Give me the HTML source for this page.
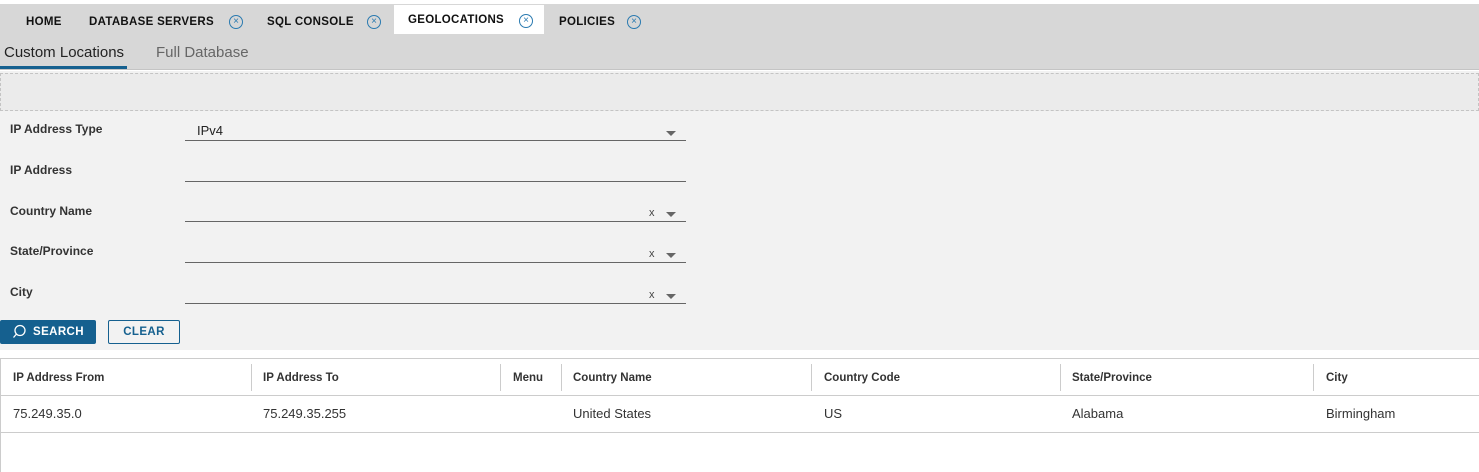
<!DOCTYPE html><html><head><style>
*{box-sizing:border-box;margin:0;padding:0}
body{width:1479px;height:472px;background:#fff;font-family:"Liberation Sans",Arial,sans-serif;position:relative;overflow:hidden;color:#222}
.abs{position:absolute}
.top{left:0;top:4px;width:1479px;height:66px;background:#d7d7d7;border-bottom:1px solid #c4c4c4}
.tab{top:16px;font-size:11.5px;font-weight:bold;letter-spacing:.3px;color:#111}
.x{width:14px;height:14px;border:1.2px solid #2a7ab0;border-radius:50%;color:#2a7ab0;font-size:10px;line-height:11px;text-align:center;font-weight:normal}
.lbl{left:10px;font-size:12px;font-weight:bold;color:#333}
.fld{left:185px;width:501px;height:1px;background:#666}
.th{top:372px;font-size:11.5px;font-weight:bold;color:#333}
.td{top:406px;font-size:13px;color:#333}
.sep{top:364px;width:1px;height:27px;background:#ccc}
.cx{font-size:11px;color:#444}
.tri{width:0;height:0;border-left:5px solid transparent;border-right:5px solid transparent;border-top:5px solid #666}
</style></head><body>
<div class="abs top"></div>
<div class="abs" style="left:394px;top:5px;width:150px;height:29px;background:#fff"></div>
<div class="abs tab" style="left:26px">HOME</div>
<div class="abs tab" style="left:89px">DATABASE SERVERS</div><div class="abs x" style="left:229px;top:15px">×</div>
<div class="abs tab" style="left:267px">SQL CONSOLE</div><div class="abs x" style="left:367px;top:15px">×</div>
<div class="abs tab" style="left:408px;top:14px">GEOLOCATIONS</div><div class="abs x" style="left:519px;top:14px">×</div>
<div class="abs tab" style="left:559px">POLICIES</div><div class="abs x" style="left:627px;top:15px">×</div>
<div class="abs" style="left:4px;top:44px;font-size:15px;color:#222">Custom Locations</div>
<div class="abs" style="left:156px;top:44px;font-size:15px;color:#666">Full Database</div>
<div class="abs" style="left:0;top:66px;width:127px;height:3px;background:#15608f"></div>
<div class="abs" style="left:0;top:71px;width:1479px;height:279px;background:#f2f2f2"></div>
<div class="abs" style="left:0;top:73px;width:1479px;height:38px;background:#ebebeb;border:1px dashed #c4c4c4"></div>
<div class="abs lbl" style="top:122px">IP Address Type</div>
<div class="abs" style="left:197px;top:123px;font-size:13px">IPv4</div>
<div class="abs tri" style="left:666px;top:131px"></div>
<div class="abs fld" style="top:140px"></div>
<div class="abs lbl" style="top:163px">IP Address</div>
<div class="abs fld" style="top:181px"></div>
<div class="abs lbl" style="top:204px">Country Name</div>
<div class="abs cx" style="left:649px;top:207px">x</div><div class="abs tri" style="left:666px;top:212px"></div>
<div class="abs fld" style="top:221px"></div>
<div class="abs lbl" style="top:244px">State/Province</div>
<div class="abs cx" style="left:649px;top:248px">x</div><div class="abs tri" style="left:666px;top:253px"></div>
<div class="abs fld" style="top:262px"></div>
<div class="abs lbl" style="top:285px">City</div>
<div class="abs cx" style="left:649px;top:289px">x</div><div class="abs tri" style="left:666px;top:294px"></div>
<div class="abs fld" style="top:303px"></div>
<div class="abs" style="left:0;top:320px;width:96px;height:24px;background:#15608f;border-radius:2px;color:#fff;font-size:11.5px;font-weight:600;letter-spacing:.4px;line-height:24px;padding-left:33px">SEARCH</div>
<svg class="abs" style="left:12px;top:324px" width="16" height="16"><circle cx="8" cy="6.5" r="5" fill="none" stroke="#fff" stroke-width="1.3"/><line x1="4.5" y1="10" x2="1.5" y2="13.5" stroke="#fff" stroke-width="1.3"/></svg>
<div class="abs" style="left:108px;top:320px;width:72px;height:24px;border:1px solid #15608f;border-radius:2px;color:#15608f;font-size:11.5px;font-weight:600;letter-spacing:.4px;line-height:22px;text-align:center">CLEAR</div>
<div class="abs" style="left:0;top:358px;width:1479px;height:1px;background:#ccc"></div>
<div class="abs" style="left:0;top:358px;width:1px;height:114px;background:#ccc"></div>
<div class="abs" style="left:0;top:395px;width:1479px;height:1px;background:#ccc"></div>
<div class="abs" style="left:0;top:432px;width:1479px;height:1px;background:#ccc"></div>
<div class="abs sep" style="left:251px"></div><div class="abs sep" style="left:500px"></div><div class="abs sep" style="left:561px"></div><div class="abs sep" style="left:811px"></div><div class="abs sep" style="left:1060px"></div><div class="abs sep" style="left:1313px"></div>
<div class="abs th" style="left:13px">IP Address From</div>
<div class="abs th" style="left:263px">IP Address To</div>
<div class="abs th" style="left:513px">Menu</div>
<div class="abs th" style="left:573px">Country Name</div>
<div class="abs th" style="left:824px">Country Code</div>
<div class="abs th" style="left:1072px">State/Province</div>
<div class="abs th" style="left:1326px">City</div>
<div class="abs td" style="left:13px">75.249.35.0</div>
<div class="abs td" style="left:263px">75.249.35.255</div>
<div class="abs td" style="left:573px">United States</div>
<div class="abs td" style="left:824px">US</div>
<div class="abs td" style="left:1072px">Alabama</div>
<div class="abs td" style="left:1326px">Birmingham</div>
</body></html>
